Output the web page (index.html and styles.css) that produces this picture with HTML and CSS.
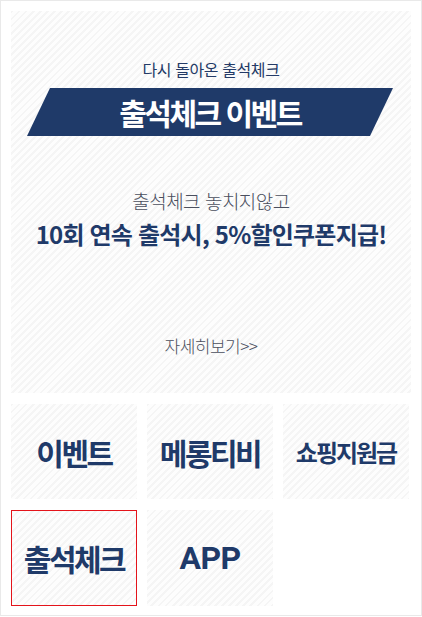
FILE: index.html
```html
<!DOCTYPE html>
<html lang="ko">
<head>
<meta charset="utf-8">
<link rel="stylesheet" href="styles.css">
</head>
<body>
<div class="frame">
  <section class="hero hatch">
    <p class="hero-sub">다시 돌아온 출석체크</p>
    <div class="ribbon"><span>출석체크 이벤트</span></div>
    <p class="hero-lead">출석체크 놓치지않고</p>
    <p class="hero-main">10회 연속 출석시, 5%할인쿠폰지급!</p>
    <a class="hero-more">자세히보기&gt;&gt;</a>
  </section>
  <nav class="menu">
    <a class="cell hatch">이벤트</a>
    <a class="cell hatch">메롱티비</a>
    <a class="cell hatch small">쇼핑지원금</a>
    <a class="cell hatch active">출석체크</a>
    <a class="cell hatch latin">APP</a>
  </nav>
</div>
</body>
</html>
```

FILE: styles.css
```css
* { box-sizing: border-box; }
html, body { margin: 0; padding: 0; background: #fff; }
body { font-family: "Noto Sans CJK KR", "Noto Sans", sans-serif; }

.frame {
  width: 422px;
  height: 616px;
  border: 1px solid #e9e9e9;
  padding: 10px;
}

.hatch {
  background: repeating-linear-gradient(135deg, #f5f5f5 0 2px, #fdfdfd 2px 5px);
}

.hero {
  width: 400px;
  height: 382px;
  display: flex;
  flex-direction: column;
  align-items: center;
}

.hero p { margin: 0; }

.hero-sub {
  margin-top: 47px !important;
  font-size: 16px;
  line-height: 22px;
  color: #243a66;
  letter-spacing: -0.4px;
}

.ribbon {
  margin-top: 8px;
  align-self: flex-start;
  margin-left: 16px;
  width: 366px;
  height: 48px;
  background: #1f3a69;
  clip-path: polygon(23px 0, 100% 0, calc(100% - 23px) 100%, 0 100%);
  display: flex;
  align-items: center;
  justify-content: center;
}

.ribbon span {
  color: #fff;
  font-weight: 700;
  font-size: 30px;
  letter-spacing: -2.5px;
  line-height: 1;
}

.hero-lead {
  margin-top: 52px !important;
  font-size: 19px;
  line-height: 26px;
  color: #4a4f5e;
  font-weight: 300;
  letter-spacing: -0.5px;
}

.hero-main {
  margin-top: 4px !important;
  font-size: 24px;
  line-height: 32px;
  font-weight: 700;
  color: #1f3a69;
  letter-spacing: -0.8px;
}

.hero-more {
  margin-top: 85px;
  font-size: 17px;
  line-height: 22px;
  color: #4a4f5e;
  font-weight: 300;
  letter-spacing: -0.5px;
}

.menu {
  margin-top: 11px;
  display: grid;
  grid-template-columns: repeat(3, 126px);
  grid-template-rows: 95px 96px;
  column-gap: 10px;
  row-gap: 11px;
}

.cell {
  display: flex;
  align-items: center;
  justify-content: center;
  font-size: 30px;
  font-weight: 700;
  color: #1f3a69;
  letter-spacing: -2.5px;
  text-decoration: none;
}

.cell.small { font-size: 24px; letter-spacing: -2px; }
.cell.latin { font-family: "Roboto", sans-serif; font-size: 32px; letter-spacing: -0.5px; }
.cell.active { outline: 1px solid #e4141b; outline-offset: -1px; }
```
